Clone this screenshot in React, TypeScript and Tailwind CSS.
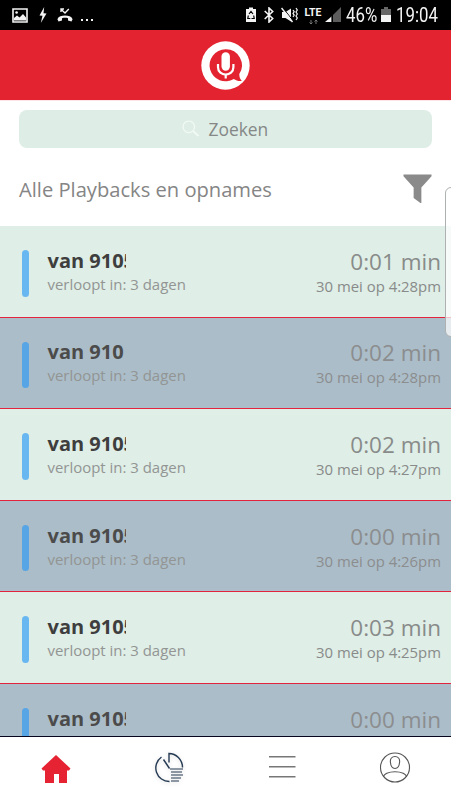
type Recording = {
  clipped: boolean;
  duration: string;
  date: string;
};

const recordings: Recording[] = [
  { clipped: true, duration: '0:01 min', date: '30 mei op 4:28pm' },
  { clipped: false, duration: '0:02 min', date: '30 mei op 4:28pm' },
  { clipped: true, duration: '0:02 min', date: '30 mei op 4:27pm' },
  { clipped: true, duration: '0:00 min', date: '30 mei op 4:26pm' },
  { clipped: true, duration: '0:03 min', date: '30 mei op 4:25pm' },
  { clipped: true, duration: '0:00 min', date: '30 mei op 4:25pm' },
];

function StatusBar() {
  return (
    <div className="flex h-[30px] shrink-0 items-center bg-black text-[#f4f4f4] font-['Roboto',sans-serif]">
      <svg className="ml-[12px] h-[15px] w-[16px]" viewBox="0 0 16 15">
        <path d="M1 1h14v13H1z" fill="none" stroke="currentColor" strokeWidth="1.6" />
        <path d="M2 12.500V10l3-2.500 2.500 2L11 6l3 3.500v3z" fill="currentColor" />
        <circle cx="4.600" cy="4.500" r="1.300" fill="currentColor" />
      </svg>
      <svg className="ml-[11px] h-[16px] w-[8px]" viewBox="0 0 8 16">
        <path d="M5.200 0 .500 8.500l3 .200L1.800 16 7.500 6.600l-3-.400z" fill="currentColor" />
      </svg>
      <svg className="ml-[10px] h-[15px] w-[16px]" viewBox="0 0 16 15">
        <path d="M4 1.200 8 5l3.800-4M4 4V1h3" fill="none" stroke="currentColor" strokeWidth="1.400" />
        <path d="M.4 11.200C1.600 8.400 4.500 7.600 8 7.600s6.400.8 7.600 3.600L14.500 13.500 11 12.500v-2.200c-2-.6-4-.6-6 0v2.200L1.500 13.500z" fill="currentColor" />
      </svg>
      <div className="ml-[8px] mt-[10px] flex gap-[3px]">
        <i className="size-[2px] bg-current" />
        <i className="size-[2px] bg-current" />
        <i className="size-[2px] bg-current" />
      </div>
      <svg className="ml-[153px] h-[16px] w-[10px]" viewBox="0 0 10 16">
        <path d="M3 .5h4V2h3v13H0V2h3z" fill="currentColor" />
        <path d="m3 7 2-2.500L7 7M2.300 8.500 1.800 11.500h2.500M7.700 8.500l.5 3H5.500" fill="none" stroke="#000" strokeWidth="1.200" />
      </svg>
      <svg className="ml-[8px] h-[16px] w-[10px]" viewBox="0 0 10 16">
        <path d="m.7 4 8 7.500L5 15V1l3.700 3.500-8 7.500" fill="none" stroke="currentColor" strokeWidth="1.600" />
      </svg>
      <svg className="ml-[7px] h-[16px] w-[17px]" viewBox="0 0 17 16">
        <path d="M1 5h3.500L10 1.500v13L4.500 11H1z" fill="currentColor" />
        <path d="m1.500 .3 11 14" stroke="#000" strokeWidth="1" />
        <path d="m.5 1 11 14" stroke="currentColor" strokeWidth="1.500" />
        <path d="m12 3 1.200 1.700L12 6.400l1.200 1.700L12 9.800M15 1l1.300 2L15 5l1.300 2L15 9l1.300 2-1.300 2" fill="none" stroke="currentColor" strokeWidth="1.200" />
      </svg>
      <div className="ml-[6px] flex h-[15px] w-[18px] flex-col items-center">
        <span className="text-[10.500px] font-bold leading-[10px]">LTE</span>
        <svg className="mt-[2px] h-[4px] w-[9px] shrink-0" viewBox="0 0 9 4">
          <path d="M2 0v4M.5 2.500 2 4l1.500-1.500M7 4V0M5.500 1.500 7 0l1.500 1.500" stroke="#777" fill="none" />
        </svg>
      </div>
      <svg className="ml-[3px] h-[16px] w-[16px]" viewBox="0 0 16 16">
        <path d="M16 0v15H8V8zM7 9v6H5v-4z" fill="#5c5c5c" />
        <path d="M6 10v5H0z" fill="currentColor" />
      </svg>
      <span className="ml-[5px] w-[32px] origin-left scale-x-[.84] whitespace-nowrap text-[20px] leading-[30px]">46%</span>
      <svg className="ml-[3px] h-[16px] w-[10px]" viewBox="0 0 10 16">
        <path d="M3 0h4v2h3v7H0V2h3z" fill="#666" />
        <path d="M0 8h10v7H0z" fill="currentColor" />
      </svg>
      <span className="ml-[5px] origin-left scale-x-[.84] whitespace-nowrap text-[20px] leading-[30px]">19:04</span>
    </div>
  );
}

function Header() {
  return (
    <header className="flex h-[70px] shrink-0 items-center justify-center bg-[#e42331]">
      <svg className="h-[49px] w-[49px]" viewBox="0 0 49 49">
        <circle cx="24.500" cy="24.500" r="24.200" fill="#fff" />
        <path d="M24.500 8.300a16 16 0 1 0 8.300 29.700c2.200 1.500 4.900 2.400 8 2-1.600-1.800-2.600-4-2.500-7a16 16 0 0 0-13.800-24.700z" fill="#e42331" />
        <rect x="20.500" y="11.300" width="8.400" height="18.500" rx="4.200" fill="#fff" />
        <path d="M17 23v3.200c0 9.800 15.400 9.800 15.400 0V23M24.700 33.500v4" fill="none" stroke="#fff" strokeWidth="2.200" />
      </svg>
    </header>
  );
}

function RecordingRow({ recording, alternate }: { recording: Recording; alternate: boolean }) {
  return (
    <li
      className={`flex h-[91.600px] shrink-0 items-start border-b border-b-[#e4243d] pl-[22px] pr-[10px] ${
        alternate ? 'bg-[#abbdc8]' : 'bg-[#dfeee6]'
      }`}
    >
      <i className={`mt-[24px] h-[46.500px] w-[6.500px] rounded-full ${alternate ? 'bg-[#57a5e5]' : 'bg-[#69b7f1]'}`} />
      <div className="ml-[19px] mt-[19.800px]">
        <div className={`flex text-[20px] font-bold leading-[30px] ${alternate ? 'text-[#4c4b4b]' : 'text-[#3e3e3e]'}`}>
          <span className="whitespace-nowrap">van 910</span>
          {recording.clipped && <span className="w-[2px] overflow-hidden">5</span>}
        </div>
        <div className="-mt-px text-[14.950px] leading-[18px] text-[#929594]">verloopt in: 3 dagen</div>
      </div>
      <div className={`ml-auto mt-[19.800px] text-right ${alternate ? 'text-[#8b8d8f]' : 'text-[#888b8a]'}`}>
        <div className="text-[22.500px] leading-[31px]">{recording.duration}</div>
        <div className="text-[14.900px] leading-[18px]">{recording.date}</div>
      </div>
    </li>
  );
}

function BottomNav() {
  return (
    <nav className="grid h-[64px] shrink-0 grid-cols-4 items-start justify-items-center border-t border-[#06051b] bg-white">
      <svg className="mt-[17px] h-[30px] w-[30px]" viewBox="0 0 30 30">
        <path d="M15 1 29.500 14.500l-1.500 2h-2V29h-8v-9h-5v9H4V16.500H2l-1.500-2z" fill="#e62333" />
      </svg>
      <svg className="mt-[15px] h-[32px] w-[32px] drop-shadow-sm" viewBox="0 0 32 32" fill="none" stroke="#263b54" strokeWidth="1.400">
        <path d="M8.500 5A13.500 13.500 0 0 0 16.500 29.500M16 10.500V1.500c7 0 13.500 6 13.500 14M10.500 7.500l6 9" />
        <path d="M17 17h13M18 20h11M18 23h12M18 26h10M18 29h8" strokeWidth="1.200" />
      </svg>
      <svg className="mt-[15px] h-[30px] w-[28px]" viewBox="0 0 28 30">
        <path d="M1 4.800h26.500M1 14.800h26.500M1 24.800h26.500" stroke="#777" strokeWidth="1.400" />
      </svg>
      <svg className="mt-[15px] h-[32px] w-[32px]" viewBox="0 0 32 32" fill="none" stroke="#555" strokeWidth="1.100">
        <circle cx="16" cy="15.500" r="14.500" />
        <path d="M16 4.500c-3 0-5 2.200-4.600 5.500.3 4.200 2 6.500 4.600 6.500s4.300-2.300 4.600-6.500C21 6.700 19 4.500 16 4.500zM4.500 25c0-3 5-5.300 11.500-5.300s11.500 2.300 11.500 5.300" />
      </svg>
    </nav>
  );
}

export default function App() {
  return (
    <div className="relative flex h-[800px] w-full flex-col overflow-hidden bg-white font-['Open_Sans','Noto_Sans',sans-serif]">
      <StatusBar />
      <Header />
      <section className="h-[126px] shrink-0 border-t border-[#fde5e7] px-[19px] pt-[9px]">
        <div className="flex h-[37.500px] items-center rounded-[8px] bg-[#deede6] pl-[163px] text-[17.400px] text-[#858887]">
          <svg className="h-[17px] w-[17px]" viewBox="0 0 17 17" fill="none" stroke="#f3faf6" strokeWidth="1.200">
            <circle cx="6.800" cy="6.800" r="5.800" />
            <path d="m11 11 5.500 5" strokeWidth="1.700" />
          </svg>
          <span className="ml-[9.500px] leading-[38px]">Zoeken</span>
        </div>
        <div className="mt-[24px] flex items-center justify-between">
          <h1 className="text-[20.150px] leading-[34px] text-[#858585]">Alle Playbacks en opnames</h1>
          <svg className="h-[30px] w-[29px]" viewBox="0 0 30 30" preserveAspectRatio="none">
            <path d="M.5.500h29v1.800L19 13.500V29h-1l-7-5V13.500L.5 2.300z" fill="#8a8a8a" />
          </svg>
        </div>
      </section>
      <ul className="flex min-h-0 flex-1 flex-col overflow-hidden">
        {recordings.map((recording, index) => (
          <RecordingRow key={index} recording={recording} alternate={index % 2 === 1} />
        ))}
      </ul>
      <BottomNav />
      <div className="absolute left-[445px] top-[187px] h-[150px] w-[12px] rounded-[6px] border border-[#aeb1b1] bg-white/70" />
    </div>
  );
}
